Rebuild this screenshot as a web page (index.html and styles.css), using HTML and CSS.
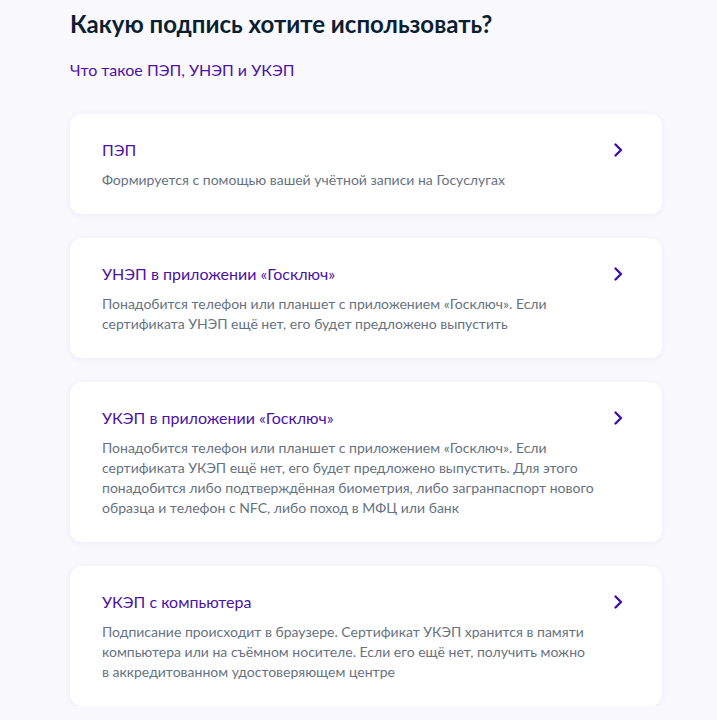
FILE: index.html
```html
<!DOCTYPE html>
<html lang="ru">
<head>
<meta charset="utf-8">
<link rel="stylesheet" href="styles.css">
</head>
<body>
<main class="page">
  <h1 class="title">Какую подпись хотите использовать?</h1>
  <a class="info-link" href="#">Что такое ПЭП, УНЭП и УКЭП</a>
  <div class="list">
    <a class="card" href="#">
      <div class="card-body">
        <div class="card-title">ПЭП</div>
        <div class="card-text">Формируется с помощью вашей учётной записи на Госуслугах</div>
      </div>
      <svg class="chev" viewBox="0 0 24 24" width="24" height="24"><path d="M9.5 6.5 L15 12 L9.5 17.5" fill="none" stroke="#3a10b0" stroke-width="2.4" stroke-linecap="round" stroke-linejoin="round"/></svg>
    </a>
    <a class="card" href="#">
      <div class="card-body">
        <div class="card-title">УНЭП в приложении «Госключ»</div>
        <div class="card-text">Понадобится телефон или планшет с приложением «Госключ». Если сертификата УНЭП ещё нет, его будет предложено выпустить</div>
      </div>
      <svg class="chev" viewBox="0 0 24 24" width="24" height="24"><path d="M9.5 6.5 L15 12 L9.5 17.5" fill="none" stroke="#3a10b0" stroke-width="2.4" stroke-linecap="round" stroke-linejoin="round"/></svg>
    </a>
    <a class="card" href="#">
      <div class="card-body">
        <div class="card-title">УКЭП в приложении «Госключ»</div>
        <div class="card-text">Понадобится телефон или планшет с приложением «Госключ». Если сертификата УКЭП ещё нет, его будет предложено выпустить. Для этого понадобится либо подтверждённая биометрия, либо загранпаспорт нового образца и телефон с NFC, либо поход в МФЦ или банк</div>
      </div>
      <svg class="chev" viewBox="0 0 24 24" width="24" height="24"><path d="M9.5 6.5 L15 12 L9.5 17.5" fill="none" stroke="#3a10b0" stroke-width="2.4" stroke-linecap="round" stroke-linejoin="round"/></svg>
    </a>
    <a class="card" href="#">
      <div class="card-body">
        <div class="card-title">УКЭП с компьютера</div>
        <div class="card-text">Подписание происходит в браузере. Сертификат УКЭП хранится в памяти компьютера или на съёмном носителе. Если его ещё нет, получить можно в аккредитованном удостоверяющем центре</div>
      </div>
      <svg class="chev" viewBox="0 0 24 24" width="24" height="24"><path d="M9.5 6.5 L15 12 L9.5 17.5" fill="none" stroke="#3a10b0" stroke-width="2.4" stroke-linecap="round" stroke-linejoin="round"/></svg>
    </a>
  </div>
</main>
</body>
</html>
```

FILE: styles.css
```css
html, body {
  margin: 0;
  padding: 0;
  background: #f8f8fd;
}
body {
  font-family: Lato, "Noto Sans", sans-serif;
  color: #0b1f33;
}
.page {
  width: 592px;
  margin-left: 70px;
  padding-top: 8px;
}
.title {
  margin: 0;
  font-size: 24px;
  line-height: 32px;
  font-weight: 700;
  color: #0b1f33;
}
.info-link {
  display: block;
  margin-top: 20px;
  font-size: 16px;
  line-height: 20px;
  color: #4b13a6;
  text-decoration: none;
}
.list {
  display: flex;
  flex-direction: column;
  gap: 24px;
  margin-top: 34px;
}
.card {
  display: flex;
  align-items: flex-start;
  background: #fff;
  border-radius: 12px;
  padding: 24px 32px;
  box-shadow: 0 1px 6px rgba(34, 60, 130, 0.06);
  text-decoration: none;
}
.card-body {
  flex: 1;
  min-width: 0;
  padding-right: 12px;
}
.card-title {
  font-size: 16px;
  line-height: 24px;
  color: #4b13a6;
}
.card-text {
  margin-top: 8px;
  font-size: 14px;
  line-height: 20px;
  color: #66727f;
}
.chev {
  flex: none;
}
```
